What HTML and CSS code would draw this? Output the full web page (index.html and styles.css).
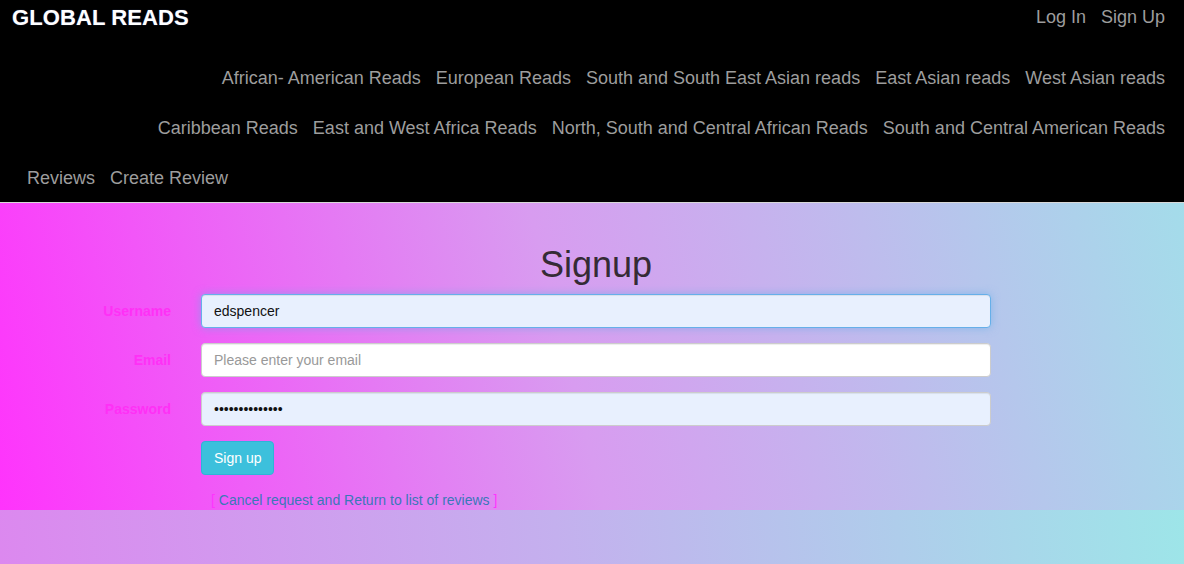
FILE: index.html
```html
<!DOCTYPE html>
<html lang="en">
<head>
<meta charset="utf-8">
<title>Global Reads - Signup</title>
<link rel="stylesheet" href="styles.css">
</head>
<body>
<header class="navbar">
  <div class="nav-top">
    <a class="brand" href="#">GLOBAL READS</a>
    <ul class="nav-links">
      <li><a href="#">Log In</a></li>
      <li><a href="#">Sign Up</a></li>
    </ul>
  </div>
  <ul class="nav-links nav-row right">
    <li><a href="#">African- American Reads</a></li>
    <li><a href="#">European Reads</a></li>
    <li><a href="#">South and South East Asian reads</a></li>
    <li><a href="#">East Asian reads</a></li>
    <li><a href="#">West Asian reads</a></li>
  </ul>
  <ul class="nav-links nav-row right">
    <li><a href="#">Caribbean Reads</a></li>
    <li><a href="#">East and West Africa Reads</a></li>
    <li><a href="#">North, South and Central African Reads</a></li>
    <li><a href="#">South and Central American Reads</a></li>
  </ul>
  <ul class="nav-links nav-row left">
    <li><a href="#">Reviews</a></li>
    <li><a href="#">Create Review</a></li>
  </ul>
</header>
<main class="content">
  <h2 class="title">Signup</h2>
  <form class="signup-form">
    <label class="field-label" for="username">Username</label>
    <input class="field-input autofill focused" id="username" type="text" value="edspencer">
    <label class="field-label" for="email">Email</label>
    <input class="field-input" id="email" type="email" placeholder="Please enter your email">
    <label class="field-label" for="password">Password</label>
    <input class="field-input autofill" id="password" type="password" value="mypassword1234">
    <span></span>
    <div class="actions"><button class="btn-info" type="button">Sign up</button></div>
  </form>
  <p class="cancel"><span class="bracket">[</span> <a href="#">Cancel request and Return to list of reviews</a> <span class="bracket">]</span></p>
</main>
</body>
</html>
```
FILE: styles.css
```css
html {
  height: 100%;
}
body {
  margin: 0;
  min-height: 100%;
  font-family: "Liberation Sans", Arial, Helvetica, sans-serif;
  font-size: 14px;
  line-height: 1.42857;
  color: #333;
  background: linear-gradient(84deg, #dc88ef 0%, #c4b0ee 45%, #9aeae8 100%);
}
a {
  text-decoration: none;
}
ul {
  list-style: none;
  margin: 0;
  padding: 0;
}
.navbar {
  background: #000;
  border-bottom: 1px solid #d8d8d8;
  height: 203px;
  box-sizing: border-box;
  overflow: hidden;
}
.nav-top {
  display: flex;
  justify-content: space-between;
  align-items: center;
  height: 36px;
  padding: 0 19px 0 12px;
  margin-bottom: 18px;
}
.brand {
  color: #fff;
  font-weight: bold;
  font-size: 22px;
  letter-spacing: 0.1px;
  text-shadow: 0 0 1px rgba(120, 150, 255, 0.6);
}
.nav-links {
  display: flex;
  gap: 15px;
}
.nav-links a {
  color: #9d9d9d;
  font-size: 18px;
  line-height: 20px;
}
.nav-row {
  height: 50px;
  align-items: center;
}
.nav-row.right {
  justify-content: flex-end;
  padding-right: 19px;
}
.nav-row.left {
  justify-content: flex-start;
  padding-left: 27px;
}
.content {
  background: linear-gradient(76deg, #ff33fc 0%, #d89cf0 48%, #a4dcea 100%);
  padding: 42px 0 0;
}
.title {
  margin: 0 0 9px;
  font-size: 36px;
  font-weight: 500;
  line-height: 1.1;
  text-align: center;
  padding-left: 8px;
  color: #352b35;
}
.signup-form {
  display: grid;
  grid-template-columns: 171px 790px;
  column-gap: 30px;
  row-gap: 15px;
  align-items: center;
}
.field-label {
  text-align: right;
  font-weight: bold;
  color: #ff30f6;
  padding-top: 2px;
}
.field-input {
  box-sizing: border-box;
  height: 34px;
  padding: 6px 12px;
  font-family: inherit;
  font-size: 14px;
  color: #111;
  background: #fff;
  border: 1px solid #ccc;
  border-radius: 4px;
  box-shadow: inset 0 1px 1px rgba(0, 0, 0, 0.075);
  outline: none;
}
.field-input::placeholder {
  color: #999;
}
.field-input.autofill {
  background: #e8f0fe;
}
.field-input.focused {
  border-color: #66afe9;
  box-shadow: inset 0 1px 1px rgba(0, 0, 0, 0.075), 0 0 8px rgba(102, 175, 233, 0.6);
}
.actions {
  display: flex;
}
.btn-info {
  height: 34px;
  padding: 6px 12px;
  font-family: inherit;
  font-size: 14px;
  color: #fff;
  background: #3cc0dc;
  border: 1px solid #2eb4d8;
  border-radius: 4px;
}
.cancel {
  margin: 15px 0 0;
  padding-left: 211px;
  line-height: 20px;
  height: 20px;
}
.cancel a {
  color: #3a78b8;
}
.bracket {
  color: #ff33ff;
}
```
